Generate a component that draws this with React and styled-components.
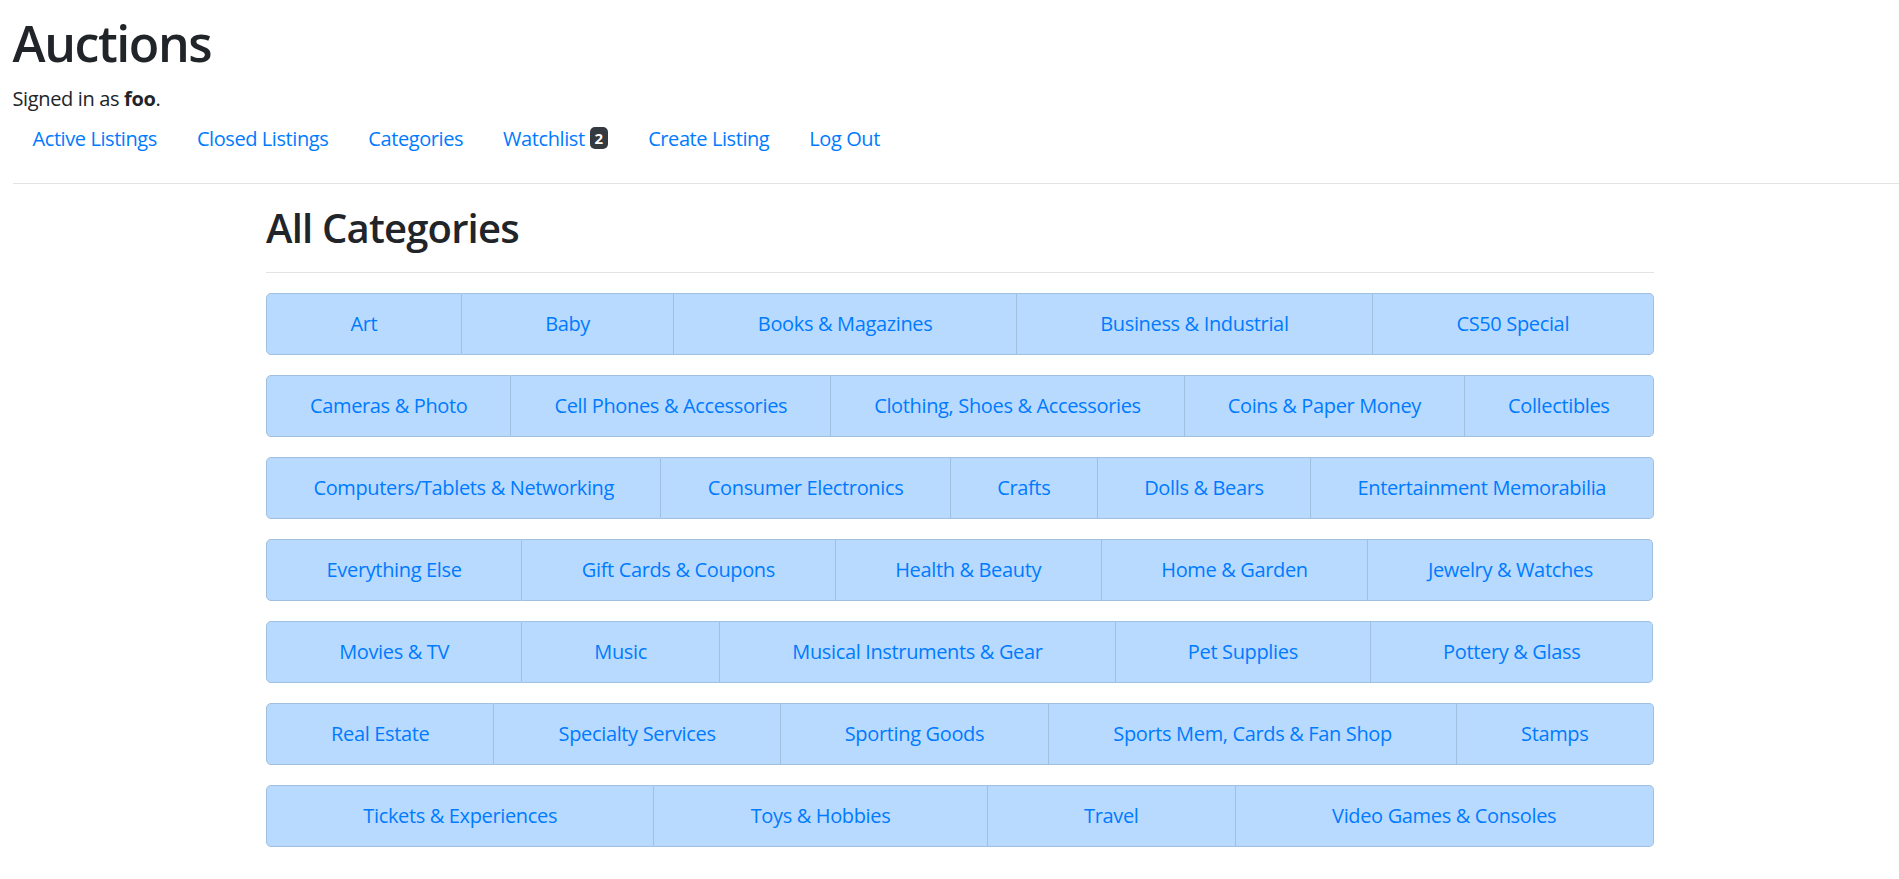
import React from "react";
import styled, { createGlobalStyle } from "styled-components";

const GlobalStyle = createGlobalStyle`
  html, body { margin: 0; }
  body {
    padding: 12.5px 0 0 12.5px;
    font-family: "Open Sans", "Noto Sans", sans-serif;
    font-size: 20px;
    line-height: 1.5;
    letter-spacing: -0.35px;
    color: #212529;
    background: #fff;
  }
  * { box-sizing: border-box; }
`;

const Title = styled.h1`
  margin: 0 0 10px;
  font-size: 50px;
  font-weight: 600;
  line-height: 1.2;
  letter-spacing: -1.4px;
`;

const SignedIn = styled.div`
  font-size: 20px;
  line-height: 30px;
  padding-top: 1px;
  margin-bottom: -1px;
`;

const Nav = styled.ul`
  display: flex;
  list-style: none;
  margin: 0;
  padding: 0;
`;

const NavLink = styled.a`
  display: block;
  padding: 11px 20px 9px;
  color: #007bff;
  text-decoration: none;
  line-height: 30px;
  letter-spacing: -0.42px;
`;

const Badge = styled.span`
  display: inline-block;
  margin-left: 5px;
  padding: 3.75px 5px;
  font-size: 15px;
  font-weight: 700;
  line-height: 1;
  letter-spacing: 0;
  color: #fff;
  background: #343a40;
  border-radius: 5px;
  vertical-align: 2px;
`;

const Rule = styled.hr`
  margin: 20px 0;
  border: 0;
  border-top: 1px solid #e3e3e3;
  height: 0;
`;

const Container = styled.main`
  width: 1387.5px;
  margin-left: 253.5px;
`;

const Heading = styled.h2`
  margin: 0 0 10px;
  font-size: 40px;
  font-weight: 600;
  line-height: 1.2;
  letter-spacing: -0.8px;
`;

const Row = styled.div`
  display: flex;
  margin-bottom: 20px;
`;

const Item = styled.a`
  flex: 1 1 auto;
  padding: 15.5px 25px 14.5px;
  line-height: 30px;
  text-align: center;
  color: #007bff;
  text-decoration: none;
  white-space: nowrap;
  background: #b8daff;
  border: 1px solid #a1bfdf;
  & + & { border-left: 0; }
  &:first-child { border-radius: 5px 0 0 5px; }
  &:last-child { border-radius: 0 5px 5px 0; }
`;

const rows = [
  ["Art", "Baby", "Books & Magazines", "Business & Industrial", "CS50 Special"],
  ["Cameras & Photo", "Cell Phones & Accessories", "Clothing, Shoes & Accessories", "Coins & Paper Money", "Collectibles"],
  ["Computers/Tablets & Networking", "Consumer Electronics", "Crafts", "Dolls & Bears", "Entertainment Memorabilia"],
  ["Everything Else", "Gift Cards & Coupons", "Health & Beauty", "Home & Garden", "Jewelry & Watches"],
  ["Movies & TV", "Music", "Musical Instruments & Gear", "Pet Supplies", "Pottery & Glass"],
  ["Real Estate", "Specialty Services", "Sporting Goods", "Sports Mem, Cards & Fan Shop", "Stamps"],
  ["Tickets & Experiences", "Toys & Hobbies", "Travel", "Video Games & Consoles"],
];

export default function App() {
  return (
    <>
      <GlobalStyle />
      <Title>Auctions</Title>
      <SignedIn>
        Signed in as <strong>foo</strong>.
      </SignedIn>
      <Nav>
        <li><NavLink href="#">Active Listings</NavLink></li>
        <li><NavLink href="#">Closed Listings</NavLink></li>
        <li><NavLink href="#">Categories</NavLink></li>
        <li>
          <NavLink href="#">
            Watchlist<Badge>2</Badge>
          </NavLink>
        </li>
        <li><NavLink href="#">Create Listing</NavLink></li>
        <li><NavLink href="#">Log Out</NavLink></li>
      </Nav>
      <Rule />
      <Container>
        <Heading>All Categories</Heading>
        <Rule />
        {rows.map((r, i) => (
          <Row key={i}>
            {r.map((c) => (
              <Item key={c} href="#">{c}</Item>
            ))}
          </Row>
        ))}
      </Container>
    </>
  );
}
